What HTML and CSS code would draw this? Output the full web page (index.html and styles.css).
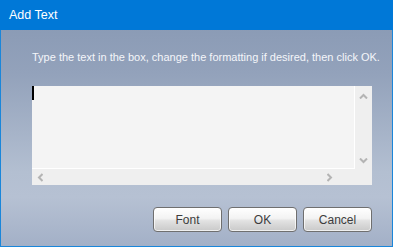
FILE: index.html
```html
<!DOCTYPE html>
<html lang="en">
<head>
 <meta charset="UTF-8">
 <title>Add Text</title>
 <link rel="stylesheet" href="styles.css">
</head>
<body>
 <div class="dialog">
  <div class="title-bar">Add Text</div>

  <div class="dialog-body">
   <p class="prompt">Type the text in the box, change the formatting if desired, then click OK.</p>

   <div class="text-box">
    <div class="text-area">
     <span class="caret"></span>
    </div>
    <div class="v-scroll">
     <svg width="9" height="6" viewBox="0 0 9 6"><path d="M1 5.5 4.5 2 8 5.5" fill="none" stroke="#b4b4b4" stroke-width="2"/></svg>
     <svg width="9" height="6" viewBox="0 0 9 6"><path d="M1 0.5 4.5 4 8 0.5" fill="none" stroke="#b4b4b4" stroke-width="2"/></svg>
    </div>
    <div class="h-scroll">
     <svg width="6" height="9" viewBox="0 0 6 9"><path d="M5.5 1 2 4.5 5.5 8" fill="none" stroke="#b4b4b4" stroke-width="2"/></svg>
     <svg width="6" height="9" viewBox="0 0 6 9"><path d="M0.5 1 4 4.5 0.5 8" fill="none" stroke="#b4b4b4" stroke-width="2"/></svg>
    </div>
    <div class="corner"></div>
   </div>

   <div class="buttons">
    <button class="btn">Font</button>
    <button class="btn">OK</button>
    <button class="btn">Cancel</button>
   </div>
  </div>
 </div>
</body>
</html>
```

FILE: styles.css
```css
:root {
 --frame-blue: #0078d7;
 --edge-blue: #1a86da;
 --box-bg: #f4f4f4;
 --scroll-bg: #efefef;
}

html,
body {
 margin: 0;
 padding: 0;
}

body {
 font-family: "Liberation Sans", Arial, sans-serif;
 font-size: 12px;
}

.dialog {
 width: 393px;
 height: 247px;
 box-sizing: border-box;
 border: 1px solid var(--edge-blue);
 border-top: none;
 display: flex;
 flex-direction: column;
 background: linear-gradient(to bottom, #8697b2 0%, #93a2bb 30%, #b3bfd1 70%, #b6c1d3 80%, #a3b0c7 100%);
}

.title-bar {
 height: 30px;
 margin: 0 -1px;
 padding-left: 9px;
 background-color: var(--frame-blue);
 color: #ffffff;
 font-size: 12.5px;
 line-height: 30px;
}

.dialog-body {
 flex-grow: 1;
 display: flex;
 flex-direction: column;
 padding: 0 20px 0 31px;
}

.prompt {
 margin: 20px -12px 0 0;
 color: #f4f6fa;
 font-size: 11px;
 line-height: 14px;
 white-space: nowrap;
}

/* text box with both scrollbars */
.text-box {
 margin-top: 22px;
 width: 340px;
 height: 99px;
 display: grid;
 grid-template-columns: 1fr 17px;
 grid-template-rows: 1fr 16px;
 background-color: var(--scroll-bg);
}

.text-area {
 background-color: var(--box-bg);
 border-right: 1px solid #ffffff;
 border-bottom: 1px solid #ffffff;
 position: relative;
}

.caret {
 position: absolute;
 left: 0;
 top: 0;
 width: 2px;
 height: 14px;
 background-color: #000000;
}

.v-scroll {
 display: flex;
 flex-direction: column;
 justify-content: space-between;
 align-items: center;
 padding: 7px 0 5px;
}

.h-scroll {
 display: flex;
 justify-content: space-between;
 align-items: center;
 padding: 0 22px 0 5px;
}

.buttons {
 margin-top: 22px;
 display: flex;
 justify-content: flex-end;
 gap: 6px;
}

.btn {
 width: 69px;
 height: 25px;
 padding: 0;
 border: 1px solid #6f6f6f;
 border-radius: 4px;
 background: linear-gradient(to bottom, #ffffff 0%, #f3f3f3 45%, #e2e2e2 55%, #c9c9c9 100%);
 box-shadow: inset 0 0 0 1px rgba(255, 255, 255, 0.7);
 color: #3c3c3c;
 font-family: "Liberation Sans", Arial, sans-serif;
 font-size: 12px;
}
```
